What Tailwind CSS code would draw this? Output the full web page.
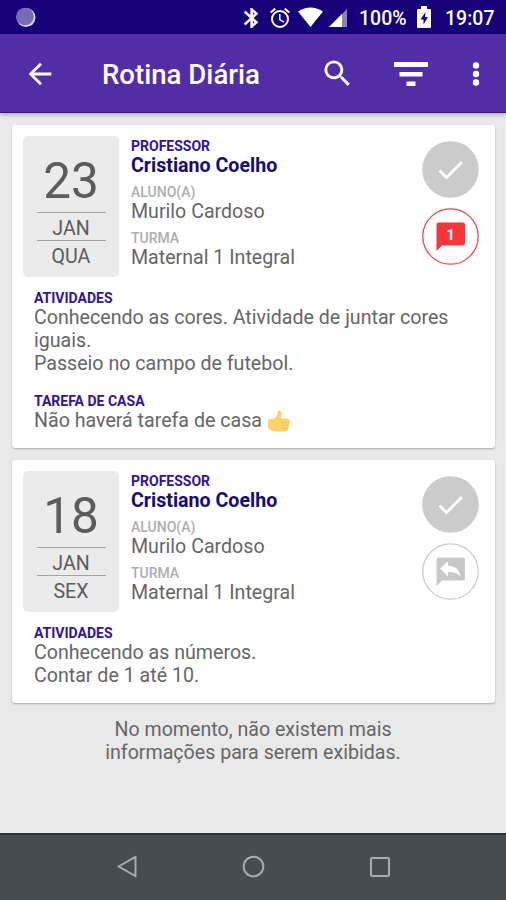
<!DOCTYPE html>
<html lang="pt-BR">
<head>
<meta charset="utf-8">
<title>Rotina Diária</title>
<script src="https://cdn.jsdelivr.net/npm/@tailwindcss/browser@4"></script>
</head>
<body class="w-[506px] h-[900px] overflow-hidden flex flex-col bg-[#e9e9e9] font-[Roboto,sans-serif] text-[19.620px] leading-[23px] text-[#666]">
  <!-- Status bar -->
  <div class="h-[34px] shrink-0 bg-[#150078] flex items-center text-white">
    <svg class="ml-4 w-5 h-5" viewBox="0 0 20 20"><circle cx="10" cy="10.500" r="9.500" fill="#d9d6ee"/><circle cx="9" cy="9.500" r="8.800" fill="#776bb3"/></svg>
    <svg class="ml-[208px] w-[14px] h-5 relative top-px" viewBox="5 2 12.710 20" preserveAspectRatio="none" fill="#fff" stroke="#fff" stroke-width=".5"><path d="M17.710 7.710L12 2h-1v7.590L6.410 5 5 6.410 10.590 12 5 17.590 6.410 19 11 14.410V22h1l5.710-5.710-4.300-4.290 4.300-4.290zM13 5.830l1.880 1.880L13 9.590V5.830zm1.880 10.460L13 18.170v-3.760l1.880 1.880z"/></svg>
    <svg class="ml-[12px] w-5 h-5 relative top-px" viewBox="2 2 20 20" fill="#fff"><path d="M22 5.720l-4.600-3.860-1.290 1.530 4.600 3.860L22 5.720zM7.880 3.390L6.600 1.860 2 5.710l1.290 1.530 4.590-3.850zM12.500 8H11v6l4.750 2.850.75-1.230-4-2.370V8zM12 4a9 9 0 100 18 9 9 0 000-18zm0 16a7 7 0 110-14 7 7 0 010 14z"/></svg>
    <svg class="ml-[8px] w-[25px] h-[20px]" viewBox="0 0 25 20" fill="#fff"><path d="M0 4.500Q12.500-3.500 25 4.500L12.500 20Z"/></svg>
    <svg class="ml-[6px] w-[18px] h-[18px] relative top-px" viewBox="0 0 18 18"><path d="M0 18L18 0V18Z" fill="#8a80bb"/><path d="M0 18L13 5V18Z" fill="#fff"/></svg>
    <div class="ml-[12px] w-[49px] text-[19.500px] font-medium whitespace-nowrap relative top-px">100%</div>
    <svg class="ml-[9px] w-[14px] h-[22px]" viewBox="0 0 14 22"><path d="M4 0h6v3h3q1 0 1 1v17q0 1-1 1H1q-1 0-1-1V4q0-1 1-1h3z" fill="#fff"/><path d="M8.500 6L3.500 13.500H6.500V18.500L11 11H8Z" fill="#150078"/></svg>
    <div class="ml-[14px] text-[19.500px] font-medium whitespace-nowrap relative top-px">19:07</div>
  </div>
  <!-- App bar -->
  <header class="h-[79px] shrink-0 bg-[#512da8] border-b border-[#3c109b] flex items-center text-white shadow-[0_2px_4px_rgba(0,0,0,.25)] z-10">
    <svg class="ml-[23px] w-[34px] h-[34px] relative top-[.5px]" viewBox="0 0 24 24" fill="#fff"><path d="M20 11H7.830l5.590-5.590L12 4l-8 8 8 8 1.410-1.410L7.830 13H20v-2z"/></svg>
    <h1 class="ml-[45px] w-[160px] text-[27.600px] leading-8 font-medium whitespace-nowrap relative top-[2px]">Rotina Diária</h1>
    <svg class="ml-[58px] w-[35px] h-[35px]" viewBox="0 0 24 24" fill="#fff"><path d="M15.500 14h-.79l-.28-.27A6.471 6.471 0 0016 9.500 6.500 6.500 0 109.500 16c1.610 0 3.090-.59 4.230-1.570l.27.28v.79l5 4.990L20.490 19l-4.990-5zm-6 0C7.010 14 5 11.990 5 9.500S7.010 5 9.500 5 14 7.010 14 9.500 11.990 14 9.500 14z"/></svg>
    <svg class="ml-[39px] w-[34px] h-[24px] relative top-[.5px]" viewBox="0 0 34 24" fill="#fff"><path d="M0 0h34v5H0zM5.500 10h23v4.500h-23zM12.500 19.500h9V24h-9z"/></svg>
    <svg class="ml-[44px] w-2 h-6 relative top-[.5px]" viewBox="0 0 8 24" fill="#fff"><circle cx="4" cy="3.500" r="3.200"/><circle cx="4" cy="12" r="3.200"/><circle cx="4" cy="20.500" r="3.200"/></svg>
  </header>

  <main class="flex-1 px-3 pt-3 flex flex-col">
    <!-- 23 JAN -->
    <article class="h-[323px] w-[483px] shrink-0 bg-white rounded-[3px] shadow-[0_1px_2px_rgba(0,0,0,.28)] pt-[11px]">
      <div class="flex pl-[11px]">
        <div class="w-[96px] h-[141px] shrink-0 rounded-[5px] bg-[#ebebeb] flex flex-col items-center text-[#5c5c5c]">
          <div class="mt-[15px] h-[61px] text-[49.500px] leading-[60px]">23</div>
          <div class="w-[69px] h-[29px] border-y border-[#a3a3a3] text-center leading-[31px]">JAN</div>
          <div class="leading-[31px]">QUA</div>
        </div>
        <div class="ml-3 pt-[2px] w-[291px] whitespace-nowrap">
          <div class="text-[14px] leading-[16px] font-bold text-[#3312a0]">PROFESSOR</div>
          <div class="font-bold text-[#190a75]">Cristiano Coelho</div>
          <div class="mt-[7px] text-[14px] leading-[16px] font-medium text-[#adadad]">ALUNO(A)</div>
          <div>Murilo Cardoso</div>
          <div class="mt-[7px] text-[14px] leading-[16px] font-medium text-[#adadad]">TURMA</div>
          <div>Maternal 1 Integral</div>
        </div>
        <div class="pt-[5px] w-[58px] flex flex-col gap-[10px]">
          <svg class="w-[57px] h-[57px]" viewBox="0 0 57 57"><circle cx="28.500" cy="28.500" r="28.300" fill="#cbcbcb"/><path d="M17.500 29.500L24.500 36.500L40 21" fill="none" stroke="#fff" stroke-width="2.800"/></svg>
          <svg class="w-[57px] h-[57px]" viewBox="0 0 57 57"><circle cx="28.500" cy="28.500" r="27.700" fill="#fff" stroke="#f04a50" stroke-width="1.300"/><path d="M17 14.500H40.500Q43 14.500 43 17V35Q43 37.500 40.500 37.500H20L14.500 43V17Q14.500 14.500 17 14.500Z" fill="#fb3439"/><text x="28.500" y="31.500" text-anchor="middle" font-size="15" font-weight="700" fill="#fff">1</text></svg>
        </div>
      </div>
      <div class="pl-[22px] pt-[13px] whitespace-nowrap">
        <div class="text-[14px] leading-[16px] font-bold text-[#3312a0]">ATIVIDADES</div>
        <div>Conhecendo as cores. Atividade de juntar cores<br>iguais.<br>Passeio no campo de futebol.</div>
        <div class="mt-[18px] text-[14px] leading-[16px] font-bold text-[#3312a0]">TAREFA DE CASA</div>
        <div class="flex items-center">Não haverá tarefa de casa
          <svg class="ml-[6px] w-[22px] h-[22px]" viewBox="0 0 22 22"><path d="M0 10.500Q0 9 1.500 9L6 8.500Q10.500 5.500 9.500 1.500Q10.500-.3 12.500 1Q15 3.500 12.800 8.500H19.500Q22 9 21.400 11.500Q22.500 13 21 14.500Q21.800 16.500 20.200 17.500Q20.700 21 17.500 21.500H9Q5 21.500 1.500 19.500Q0 18.500 0 17Z" fill="#fbd36b"/><path d="M14 12.200h7M14 15.200h6.500M14 18.200h6" stroke="#efbd57" stroke-width=".9"/></svg>
        </div>
      </div>
    </article>
    <!-- 18 JAN -->
    <article class="mt-3 h-[243px] w-[483px] shrink-0 bg-white rounded-[3px] shadow-[0_1px_2px_rgba(0,0,0,.28)] pt-[11px]">
      <div class="flex pl-[11px]">
        <div class="w-[96px] h-[141px] shrink-0 rounded-[5px] bg-[#ebebeb] flex flex-col items-center text-[#5c5c5c]">
          <div class="mt-[15px] h-[61px] text-[49.500px] leading-[60px]">18</div>
          <div class="w-[69px] h-[29px] border-y border-[#a3a3a3] text-center leading-[31px]">JAN</div>
          <div class="leading-[31px]">SEX</div>
        </div>
        <div class="ml-3 pt-[2px] w-[291px] whitespace-nowrap">
          <div class="text-[14px] leading-[16px] font-bold text-[#3312a0]">PROFESSOR</div>
          <div class="font-bold text-[#190a75]">Cristiano Coelho</div>
          <div class="mt-[7px] text-[14px] leading-[16px] font-medium text-[#adadad]">ALUNO(A)</div>
          <div>Murilo Cardoso</div>
          <div class="mt-[7px] text-[14px] leading-[16px] font-medium text-[#adadad]">TURMA</div>
          <div>Maternal 1 Integral</div>
        </div>
        <div class="pt-[5px] w-[58px] flex flex-col gap-[10px]">
          <svg class="w-[57px] h-[57px]" viewBox="0 0 57 57"><circle cx="28.500" cy="28.500" r="28.300" fill="#cbcbcb"/><path d="M17.500 29.500L24.500 36.500L40 21" fill="none" stroke="#fff" stroke-width="2.800"/></svg>
          <svg class="w-[57px] h-[57px]" viewBox="0 0 57 57"><circle cx="28.500" cy="28.500" r="27.700" fill="#fff" stroke="#cbcbcb" stroke-width="1.300"/><path d="M17 14.500H40.500Q43 14.500 43 17V35Q43 37.500 40.500 37.500H20L14.500 43V17Q14.500 14.500 17 14.500Z" fill="#c8c8c8"/><path d="M18 25.500L26 18V22.500Q36.500 23 39 34Q34.500 28.500 26 29V33.500Z" fill="#fff"/></svg>
        </div>
      </div>
      <div class="pl-[22px] pt-[13px] whitespace-nowrap">
        <div class="text-[14px] leading-[16px] font-bold text-[#3312a0]">ATIVIDADES</div>
        <div>Conhecendo as números.<br>Contar de 1 até 10.</div>
      </div>
    </article>
    <p class="mt-[15px] text-center">No momento, não existem mais<br>informações para serem exibidas.</p>
  </main>

  <!-- Navigation bar -->
  <nav class="h-[67px] shrink-0 bg-[#454d53] border-t-2 border-[#253638] flex items-center">
    <svg class="ml-[117px] w-[21px] h-[23px] relative -top-px" viewBox="0 0 21 23"><path d="M1.500 11.500L18.500 1.800V21.200Z" fill="none" stroke="#a6abae" stroke-width="2" stroke-linejoin="round"/></svg>
    <svg class="ml-[104px] w-[23px] h-[23px] relative -top-px" viewBox="0 0 23 23"><circle cx="11.500" cy="11.500" r="9.800" fill="none" stroke="#a6abae" stroke-width="2"/></svg>
    <svg class="ml-[104px] w-[22px] h-[22px] relative -top-px" viewBox="0 0 22 22"><rect x="2" y="2" width="18" height="18" rx="1" fill="none" stroke="#a6abae" stroke-width="2"/></svg>
  </nav>
</body>
</html>
